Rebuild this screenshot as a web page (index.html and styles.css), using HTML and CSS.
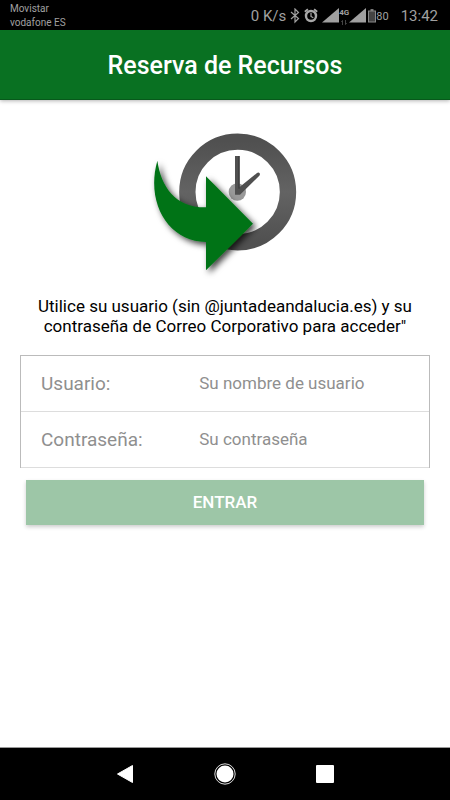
FILE: index.html
```html
<!DOCTYPE html>
<html lang="es">
<head>
  <meta charset="UTF-8" />
  <meta name="viewport" content="width=device-width, initial-scale=1.0" />
  <title>Reserva de Recursos</title>
  <link rel="stylesheet" href="styles.css">
</head>
<body>
  <!-- Status Bar -->
  <div class="status-bar">
    <div class="carriers">
      <div>Movistar</div>
      <div>vodafone ES</div>
    </div>
    <div class="status-icons">
      <span class="speed">0 K/s</span>
      <svg class="bluetooth" width="10" height="16" viewBox="0 0 10 16" fill="none" stroke="#a0a0a0" stroke-width="1.2">
        <path d="M1 4 8.500 10.500 5 14V1L8.500 4.500 1 11" />
      </svg>
      <svg class="alarm" width="14" height="16" viewBox="0 0 14 16">
        <circle cx="7" cy="8" r="5" fill="none" stroke="#a8a8a8" stroke-width="2.400" />
        <path d="M.8 3.800 3.900 1.300M13.200 3.800 10.100 1.300" stroke="#a8a8a8" stroke-width="1.800" />
        <path d="M7 5V8.500l2.300 1.300" fill="none" stroke="#a8a8a8" stroke-width="1.200" />
      </svg>
      <svg class="signal" width="17" height="16" viewBox="0 0 17 16">
        <path d="M0 14.500 17 0V14.500Z" fill="#a0a0a0" />
      </svg>
      <div class="network">
        <span>4G</span>
        <svg width="6" height="5" viewBox="0 0 6 5" fill="none" stroke="#555" stroke-width=".8">
          <path d="M1.500 5V.5M.3 2 1.500.500M4.500 0v4.500M5.700 3 4.500 4.500" />
        </svg>
      </div>
      <svg width="17" height="16" viewBox="0 0 17 16">
        <path d="M0 14.500 17 0V14.500Z" fill="#a0a0a0" />
      </svg>
      <svg class="battery" width="8" height="14" viewBox="0 0 8 14">
        <path d="M2.500 1h3" stroke="#a0a0a0" stroke-width="1.500" />
        <rect x=".5" y="2" width="7" height="11" fill="#444" stroke="#888" />
      </svg>
      <span class="level">80</span>
      <span class="time">13:42</span>
    </div>
  </div>

  <!-- Page Header -->
  <header>
    <h1>Reserva de Recursos</h1>
  </header>

  <!-- Login -->
  <main>
    <svg class="logo" width="170" height="160" viewBox="0 0 510 480" role="img" aria-label="Reserva de Recursos">
      <defs>
        <linearGradient id="ring" x1="0" y1="0" x2="0" y2="1">
          <stop offset="0" stop-color="#505050" />
          <stop offset=".5" stop-color="#636363" />
          <stop offset="1" stop-color="#505050" />
        </linearGradient>
        <filter id="shadow" x="-20%" y="-20%" width="150%" height="150%">
          <feDropShadow dx="9" dy="9" stdDeviation="9" flood-color="#000" flood-opacity=".75" />
        </filter>
      </defs>
      <circle cx="293" cy="216" r="151" fill="#fff" stroke="url(#ring)" stroke-width="49" />
      <circle cx="292" cy="216" r="26" fill="#999" />
      <path d="M285 108h14v93l52-42q5-3 8 1 2 4-1 7l-58 57h-15Z" fill="#505050" />
      <path d="M297 108v98" stroke="#333" stroke-width="3" />
      <path d="M52 122C64 200 105 263 198 262V169L339 311 198 451V366C86 365 16 250 52 122Z" fill="#067318" filter="url(#shadow)" />
    </svg>

    <p class="intro">Utilice su usuario (sin @juntadeandalucia.es) y su contraseña de Correo Corporativo para acceder"</p>

    <form>
      <div class="fields">
        <div class="field">
          <label for="usuario">Usuario:</label>
          <input type="text" id="usuario" placeholder="Su nombre de usuario">
        </div>
        <div class="field">
          <label for="contrasena">Contraseña:</label>
          <input type="password" id="contrasena" placeholder="Su contraseña">
        </div>
      </div>
      <button type="submit" class="enter" disabled>ENTRAR</button>
    </form>
  </main>

  <!-- Android Navigation Bar -->
  <nav>
    <button type="button" aria-label="Atrás">
      <svg width="24" height="24" viewBox="0 0 24 24"><path d="M4.500 12 19.500 3.500V20.500Z" fill="#fff" stroke="#fff" stroke-linejoin="round" /></svg>
    </button>
    <button type="button" aria-label="Inicio">
      <svg width="24" height="24" viewBox="0 0 24 24"><circle cx="12" cy="12" r="8.500" fill="#fff" /><circle cx="12" cy="12" r="10.200" fill="none" stroke="#ddd" /></svg>
    </button>
    <button type="button" aria-label="Recientes">
      <svg width="24" height="24" viewBox="0 0 24 24"><rect x="3" y="3" width="18" height="18" rx="1" fill="#fff" /></svg>
    </button>
  </nav>
</body>
</html>
```

FILE: styles.css
```css
/* Reset and Base Styles */
* {
  box-sizing: border-box;
  margin: 0;
  padding: 0;
}
body {
  display: flex;
  flex-direction: column;
  min-height: 100vh;
  background-color: #fff;
  color: #000;
  font-family: Roboto, "Liberation Sans", sans-serif;
}
svg {
  display: block;
  flex: none;
}

/* Status Bar */
.status-bar {
  display: flex;
  justify-content: space-between;
  height: 30px;
  padding: 2px 12px 0 10px;
  background: #000;
  color: #a0a0a0;
}
.carriers {
  font-size: 10px;
  line-height: 14px;
}
.status-icons {
  display: flex;
  align-items: center;
  font-size: 15px;
}
.bluetooth,
.alarm,
.signal {
  margin-left: 4px;
}
.network {
  display: flex;
  flex-direction: column;
  align-items: center;
  width: 10px;
  font-size: 8px;
  font-weight: bold;
  line-height: 10px;
}
.network svg {
  margin-top: 2px;
}
.battery {
  margin-left: 2px;
}
.level {
  font-size: 11px;
}
.time {
  margin-left: 12px;
}

/* Page Header */
header {
  padding: 21px 20px 18px;
  background: #097122;
  border-bottom: 1px solid #07591b;
  box-shadow: 0 1px 4px rgba(0, 0, 0, 0.3);
  color: #fff;
  text-align: center;
}
header h1 {
  font-size: 25px;
  font-weight: 500;
  line-height: 30px;
}

/* Login */
main {
  flex: 1;
  padding: 20px;
}
.logo {
  margin: 0 auto;
}
.intro {
  margin: 16px 0 19px;
  font-size: 17px;
  line-height: 20px;
  text-align: center;
}
.fields {
  border: 1px solid #bbb;
  border-bottom: 0;
}
.field {
  display: flex;
  align-items: center;
  height: 56px;
  padding: 0 20px;
  border-bottom: 1px solid #ddd;
}
.field label {
  flex: 0 0 43%;
  color: #8f8f8f;
  font-size: 19px;
}
.field input {
  flex: 1;
  min-width: 0;
  padding-bottom: 2px;
  border: 0;
  outline: 0;
  background: none;
  font-family: inherit;
  font-size: 17px;
}
.field input::placeholder {
  color: #8f8f8f;
}
.enter {
  display: block;
  width: calc(100% - 12px);
  height: 45px;
  margin: 12px 6px 0;
  padding-bottom: 2px;
  border: 0;
  background: #9dc6a7;
  box-shadow: 0 2px 4px rgba(0, 0, 0, 0.2);
  color: #fff;
  font-family: inherit;
  font-size: 17px;
  font-weight: 500;
}

/* Android Navigation Bar */
nav {
  display: flex;
  justify-content: center;
  gap: 76px;
  padding: 14px 0;
  background: #000;
  border-top: 1px solid #999;
}
nav button {
  border: 0;
  background: none;
}
```
